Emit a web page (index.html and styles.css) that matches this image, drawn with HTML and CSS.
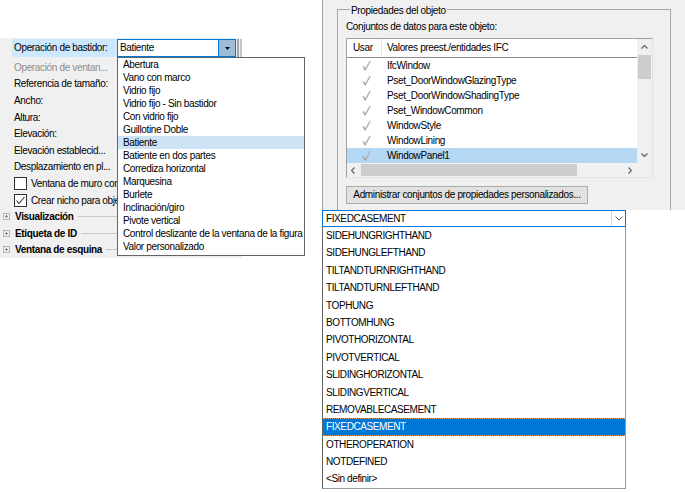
FILE: index.html
```html
<!DOCTYPE html>
<html lang="es">
<head>
<meta charset="utf-8">
<title>Propiedades de ventana</title>
<link rel="stylesheet" href="styles.css">
</head>
<body>
<div class="col-left">
  <div class="panel">
    <div class="row row-first">
      <div class="label label-sel">Operación de bastidor:</div>
      <div class="combo">
        <span class="combo-text">Batiente</span>
        <span class="combo-btn"><svg width="5" height="3" viewBox="0 0 5 3"><path d="M0 0H5L2.5 3Z" fill="#000"/></svg></span>
        <ul class="droplist">
          <li>Abertura</li>
          <li>Vano con marco</li>
          <li>Vidrio fijo</li>
          <li>Vidrio fijo - Sin bastidor</li>
          <li>Con vidrio fijo</li>
          <li>Guillotine Doble</li>
          <li class="sel">Batiente</li>
          <li>Batiente en dos partes</li>
          <li>Corrediza horizontal</li>
          <li>Marquesina</li>
          <li>Burlete</li>
          <li>Inclinación/giro</li>
          <li>Pivote vertical</li>
          <li>Control deslizante de la ventana de la figura</li>
          <li>Valor personalizado</li>
        </ul>
      </div>
      <div class="splitter"></div>
    </div>
    <div class="rows">
      <div class="row"><span class="label disabled">Operación de ventan...</span></div>
      <div class="row"><span class="label">Referencia de tamaño:</span></div>
      <div class="row"><span class="label">Ancho:</span></div>
      <div class="row"><span class="label">Altura:</span></div>
      <div class="row"><span class="label">Elevación:</span></div>
      <div class="row"><span class="label">Elevación establecid...</span></div>
      <div class="row"><span class="label">Desplazamiento en pl...</span></div>
      <div class="row"><span class="checkbox"></span><span class="cb-label">Ventana de muro cort</span></div>
      <div class="row"><span class="checkbox"><svg width="11" height="11" viewBox="0 0 11 11"><path d="M1.5 5.5L4 8.5L9.5 2" fill="none" stroke="#333" stroke-width="1.1"/></svg></span><span class="cb-label">Crear nicho para obje</span></div>
      <div class="row group"><span class="expander"></span><span class="group-title">Visualización</span></div>
      <div class="row group"><span class="expander"></span><span class="group-title">Etiqueta de ID</span></div>
      <div class="row group"><span class="expander"></span><span class="group-title">Ventana de esquina</span></div>
    </div>
  </div>
</div>
<div class="col-right">
  <div class="dialog">
    <fieldset class="groupbox">
      <legend>Propiedades del objeto</legend>
      <div class="caption">Conjuntos de datos para este objeto:</div>
      <div class="listview">
        <div class="lv-main">
          <div class="lv-header">
            <div class="lv-h1">Usar</div>
            <div class="lv-h2">Valores preest./entidades IFC</div>
          </div>
          <div class="lv-row"><span class="lv-check"><svg width="9" height="11" viewBox="0 0 9 11"><path d="M1 6.5L3.2 9.8L8.2 1" fill="none" stroke="#9a9a9a" stroke-width="1.2"/><path d="M2.2 6L3.6 8.2L7.6 1.2" fill="none" stroke="#d0d0d0" stroke-width="0.8"/></svg></span><span class="lv-text">IfcWindow</span></div>
          <div class="lv-row"><span class="lv-check"><svg width="9" height="11" viewBox="0 0 9 11"><path d="M1 6.5L3.2 9.8L8.2 1" fill="none" stroke="#9a9a9a" stroke-width="1.2"/><path d="M2.2 6L3.6 8.2L7.6 1.2" fill="none" stroke="#d0d0d0" stroke-width="0.8"/></svg></span><span class="lv-text">Pset_DoorWindowGlazingType</span></div>
          <div class="lv-row"><span class="lv-check"><svg width="9" height="11" viewBox="0 0 9 11"><path d="M1 6.5L3.2 9.8L8.2 1" fill="none" stroke="#9a9a9a" stroke-width="1.2"/><path d="M2.2 6L3.6 8.2L7.6 1.2" fill="none" stroke="#d0d0d0" stroke-width="0.8"/></svg></span><span class="lv-text">Pset_DoorWindowShadingType</span></div>
          <div class="lv-row"><span class="lv-check"><svg width="9" height="11" viewBox="0 0 9 11"><path d="M1 6.5L3.2 9.8L8.2 1" fill="none" stroke="#9a9a9a" stroke-width="1.2"/><path d="M2.2 6L3.6 8.2L7.6 1.2" fill="none" stroke="#d0d0d0" stroke-width="0.8"/></svg></span><span class="lv-text">Pset_WindowCommon</span></div>
          <div class="lv-row"><span class="lv-check"><svg width="9" height="11" viewBox="0 0 9 11"><path d="M1 6.5L3.2 9.8L8.2 1" fill="none" stroke="#9a9a9a" stroke-width="1.2"/><path d="M2.2 6L3.6 8.2L7.6 1.2" fill="none" stroke="#d0d0d0" stroke-width="0.8"/></svg></span><span class="lv-text">WindowStyle</span></div>
          <div class="lv-row"><span class="lv-check"><svg width="9" height="11" viewBox="0 0 9 11"><path d="M1 6.5L3.2 9.8L8.2 1" fill="none" stroke="#9a9a9a" stroke-width="1.2"/><path d="M2.2 6L3.6 8.2L7.6 1.2" fill="none" stroke="#d0d0d0" stroke-width="0.8"/></svg></span><span class="lv-text">WindowLining</span></div>
          <div class="lv-row lv-sel"><span class="lv-check"><svg width="9" height="11" viewBox="0 0 9 11"><path d="M1 6.5L3.2 9.8L8.2 1" fill="none" stroke="#9a9a9a" stroke-width="1.2"/><path d="M2.2 6L3.6 8.2L7.6 1.2" fill="none" stroke="#d0d0d0" stroke-width="0.8"/></svg></span><span class="lv-text">WindowPanel1</span></div>
        </div>
        <div class="vscroll">
          <svg class="arrow" width="7" height="4" viewBox="0 0 7 4"><path d="M0.5 3.5L3.5 0.5L6.5 3.5" fill="none" stroke="#606060" stroke-width="1.2"/></svg>
          <div class="vthumb"></div>
          <div class="vspace"></div>
          <svg class="arrow" width="7" height="4" viewBox="0 0 7 4"><path d="M0.5 0.5L3.5 3.5L6.5 0.5" fill="none" stroke="#606060" stroke-width="1.2"/></svg>
        </div>
        <div class="hscroll">
          <svg class="arrow" width="4" height="7" viewBox="0 0 4 7"><path d="M3.5 0.5L0.5 3.5L3.5 6.5" fill="none" stroke="#606060" stroke-width="1.2"/></svg>
          <div class="hthumb"></div>
          <div class="hspace"></div>
          <svg class="arrow" width="4" height="7" viewBox="0 0 4 7"><path d="M0.5 0.5L3.5 3.5L0.5 6.5" fill="none" stroke="#606060" stroke-width="1.2"/></svg>
        </div>
        <div class="corner"></div>
      </div>
      <button class="btn" type="button">Administrar conjuntos de propiedades personalizados...</button>
    </fieldset>
  </div>
  <div class="ifc-combo">
    <div class="ifc-box">
      <span class="ifc-text">FIXEDCASEMENT</span>
      <span class="ifc-btn"><svg width="8" height="5" viewBox="0 0 8 5"><path d="M0.5 0.5L4 4L7.5 0.5" fill="none" stroke="#606060" stroke-width="1"/></svg></span>
    </div>
    <ul class="ifc-list">
      <li>SIDEHUNGRIGHTHAND</li>
      <li>SIDEHUNGLEFTHAND</li>
      <li>TILTANDTURNRIGHTHAND</li>
      <li>TILTANDTURNLEFTHAND</li>
      <li>TOPHUNG</li>
      <li>BOTTOMHUNG</li>
      <li>PIVOTHORIZONTAL</li>
      <li>PIVOTVERTICAL</li>
      <li>SLIDINGHORIZONTAL</li>
      <li>SLIDINGVERTICAL</li>
      <li>REMOVABLECASEMENT</li>
      <li class="sel">FIXEDCASEMENT</li>
      <li>OTHEROPERATION</li>
      <li>NOTDEFINED</li>
      <li>&lt;Sin definir&gt;</li>
    </ul>
  </div>
</div>
</body>
</html>
```
FILE: styles.css
```css
* { box-sizing: border-box; }
html, body { margin: 0; padding: 0; }
body {
  width: 685px;
  height: 492px;
  overflow: hidden;
  background: #fff;
  display: flex;
  font-family: "Liberation Sans", Arial, sans-serif;
  font-size: 10px;
  letter-spacing: -0.35px;
  color: #000;
}
ul { list-style: none; margin: 0; padding: 0; }

/* ---------- left column ---------- */
.col-left {
  width: 322px;
  flex: none;
  padding-top: 38px;
}
.panel {
  width: 242px;
  height: 220px;
  background: #f0f0f0;
  padding-top: 1px;
}
.rows { padding-top: 2px; }
.row {
  height: 16.6px;
  display: flex;
  align-items: center;
}
.row-first { height: 18px; }
.label {
  padding-left: 14px;
  white-space: nowrap;
}
.label-sel {
  margin-left: 12px;
  padding-left: 2px;
  width: 105px;
  height: 18px;
  line-height: 18px;
  background: #cce8ff;
}
.disabled { color: #8c8c8c; }
.combo {
  position: relative;
  width: 119px;
  height: 18px;
  border: 1px solid #0078d7;
  background: #fff;
  display: flex;
}
.combo-text {
  flex: 1;
  padding-left: 2px;
  line-height: 16px;
}
.combo-btn {
  width: 17px;
  background: #9cbcd9;
  border-left: 1px solid #0078d7;
  display: flex;
  align-items: center;
  justify-content: center;
}
.droplist {
  position: absolute;
  top: 17px;
  left: -1px;
  width: 188px;
  background: #fff;
  border: 1px solid #646464;
  padding-bottom: 2px;
  z-index: 2;
}
.droplist li {
  height: 13px;
  line-height: 13px;
  padding-left: 5px;
  white-space: nowrap;
}
.droplist li.sel { background: #cde4f7; }
.splitter {
  width: 5px;
  height: 18px;
  margin-left: 1px;
  border-left: 2px solid #a6a6a6;
  border-right: 2px solid #c6c6c6;
}
.checkbox {
  width: 13px;
  height: 13px;
  margin-left: 14px;
  border: 1px solid #333;
  background: #fff;
  display: flex;
  align-items: center;
  justify-content: center;
}
.cb-label {
  padding-left: 4px;
  white-space: nowrap;
}
.expander {
  width: 7px;
  height: 7px;
  margin-left: 3px;
  border: 1px solid #b4b4b4;
  background:
    linear-gradient(#8a8a8a, #8a8a8a) center / 3px 1px no-repeat,
    linear-gradient(#8a8a8a, #8a8a8a) center / 1px 3px no-repeat;
}
.group-title {
  padding-left: 5px;
  font-weight: bold;
  white-space: nowrap;
}
.group::after {
  content: "";
  flex: 1;
  margin-left: 4px;
  border-top: 1px solid #c8c8c8;
}

/* ---------- right column ---------- */
.col-right {
  width: 363px;
  flex: none;
  display: flex;
  flex-direction: column;
}
.dialog {
  height: 210px;
  background: #f0f0f0;
  border-left: 1px solid #a0a0a0;
  overflow: hidden;
  padding-left: 14px;
  padding-top: 2px;
}
.groupbox {
  width: 334px;
  height: 240px;
  margin: 0;
  padding: 0 0 0 8px;
  border: 1px solid #a9a9a9;
  min-width: 0;
}
.groupbox legend {
  padding: 3px 1px 0;
  margin-left: 4px;
  line-height: 12px;
}
.caption {
  margin-top: 3px;
  height: 14px;
  line-height: 14px;
}
.listview {
  margin-top: 4px;
  width: 307px;
  height: 140px;
  border-top: 1px solid #a0a0a0;
  border-left: 1px solid #a0a0a0;
  border-right: 1px solid #e3e3e3;
  border-bottom: 1px solid #e3e3e3;
  background: #fff;
  display: grid;
  grid-template-columns: 1fr 15px;
  grid-template-rows: 1fr 14px;
}
.lv-main { min-width: 0; overflow: hidden; }
.lv-header {
  height: 19px;
  display: flex;
  border-bottom: 1px solid #8a8a8a;
}
.lv-h1 {
  width: 35px;
  padding-left: 6px;
  line-height: 18px;
  border-right: 1px solid #e5e5e5;
}
.lv-h2 {
  padding-left: 5px;
  line-height: 18px;
  white-space: nowrap;
}
.lv-row {
  height: 15px;
  display: flex;
  align-items: center;
}
.lv-check {
  width: 36px;
  display: flex;
  justify-content: center;
  padding-left: 3px;
}
.lv-text {
  padding-left: 4px;
  white-space: nowrap;
}
.lv-sel { background: #b4d7f4; }
.vscroll {
  background: #f0f0f0;
  display: flex;
  flex-direction: column;
  align-items: center;
  padding: 6px 0 6px;
}
.vthumb {
  width: 13px;
  height: 24px;
  margin-top: 6px;
  background: #cdcdcd;
}
.vspace { flex: 1; }
.hscroll {
  background: #f0f0f0;
  display: flex;
  align-items: center;
  padding: 0 5px 0 4px;
}
.hthumb {
  width: 216px;
  height: 12px;
  margin-left: 6px;
  background: #cdcdcd;
}
.hspace { flex: 1; }
.corner { background: #f0f0f0; }
.btn {
  margin-top: 8px;
  width: 242px;
  height: 18px;
  padding: 0;
  border: 1px solid #adadad;
  background: #e1e1e1;
  font-family: inherit;
  font-size: 10px;
  letter-spacing: -0.35px;
  color: #000;
  line-height: 16px;
}

/* IFC combo */
.ifc-combo { width: 304px; }
.ifc-box {
  height: 17px;
  border: 1px solid #0078d7;
  background: #fff;
  display: flex;
}
.ifc-text {
  flex: 1;
  padding-left: 3px;
  line-height: 15px;
  letter-spacing: -0.4px;
}
.ifc-btn {
  width: 14px;
  border-left: 1px solid #c8d8e8;
  display: flex;
  align-items: center;
  justify-content: center;
}
.ifc-list {
  height: 262px;
  border-left: 1px solid #646464;
  border-right: 1px solid #9a9a9a;
  border-bottom: 1px solid #9a9a9a;
  background: #fff;
}
.ifc-list li {
  height: 17.4px;
  line-height: 17.4px;
  padding-left: 3px;
  letter-spacing: -0.4px;
  white-space: nowrap;
}
.ifc-list li.sel {
  background: #0078d7;
  color: #fff;
  border-top: 1px dotted #e0a060;
  border-bottom: 1px dotted #e0a060;
  line-height: 15.4px;
}
```
